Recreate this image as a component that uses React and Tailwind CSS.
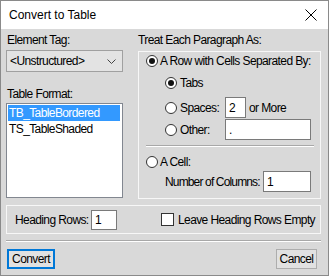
const F = "font-['Liberation_Sans',Arial,sans-serif]";

function Radio({ checked }) {
  return (
    <span className="w-[12px] h-[12px] rounded-full border border-[#333] bg-white flex items-center justify-center shrink-0">
      {checked && <span className="w-[6px] h-[6px] rounded-full bg-[#111]" />}
    </span>
  );
}

function Input({ w, h = 21, value }) {
  return (
    <span
      className="border border-[#7a7a7a] bg-white flex items-center pl-[3px] shrink-0 text-black"
      style={{ width: w, height: h }}
    >
      {value}
    </span>
  );
}

export default function App() {
  return (
    <div className={`${F} w-[329px] h-[276px] border border-[#8a8a8a] bg-[#d9d9d9] flex flex-col text-[12px] tracking-[-0.6px] text-black leading-[14px] whitespace-nowrap`}>
      <div className="h-[28px] bg-white flex items-center justify-between pl-[8px] pr-[11px] shrink-0">
        <span className="text-[12px] tracking-normal">Convert to Table</span>
        <svg width="12" height="12" viewBox="0 0 12 12">
          <path d="M0.5 0.5 L11.5 11.5 M11.5 0.5 L0.5 11.5" stroke="#000" strokeWidth="1" />
        </svg>
      </div>

      <div className="flex pl-[5px] gap-[15px]">
        <div className="w-[117px] flex flex-col">
          <div className="mt-[4px] h-[14px] pl-[1px]">Element Tag:</div>
          <div className="mt-[3px] h-[22px] border border-[#a0a0a0] bg-[#e3e3e3] flex items-center justify-between pl-[3px] pr-[6px]">
            <span>&lt;Unstructured&gt;</span>
            <svg width="9" height="5" viewBox="0 0 9 5">
              <path d="M0.5 0.5 L4.5 4.5 L8.5 0.5" stroke="#444" strokeWidth="1" fill="none" />
            </svg>
          </div>
          <div className="mt-[15px] h-[14px] pl-[1px]">Table Format:</div>
          <div className="mt-[2px] h-[95px] border border-[#828790] bg-white p-[1px] flex flex-col">
            <div className="h-[16px] bg-[#3399ff] text-white flex items-center pl-[1px] mr-[1px]">TB_TableBordered</div>
            <div className="h-[16px] flex items-center pl-[1px]">TS_TableShaded</div>
          </div>
        </div>

        <div className="w-[183px] flex flex-col">
          <div className="mt-[4px] h-[14px]">Treat Each Paragraph As:</div>
          <div className="mt-[4px] h-[148px] border border-[#f7f7f7] flex flex-col">
            <div className="mt-[2px] h-[14px] flex items-center pl-[7px] gap-[2px]">
              <Radio checked />
              <span>A Row with Cells Separated By:</span>
            </div>
            <div className="mt-[8px] h-[14px] flex items-center pl-[26px] gap-[3px]">
              <Radio checked />
              <span>Tabs</span>
            </div>
            <div className="mt-[7px] h-[21px] flex items-center pl-[26px]">
              <Radio />
              <span className="ml-[3px] w-[45px]">Spaces:</span>
              <Input w={21} value="2" />
              <span className="ml-[3px]">or More</span>
            </div>
            <div className="mt-[1px] h-[21px] flex items-center pl-[26px]">
              <Radio />
              <span className="ml-[3px] w-[45px]">Other:</span>
              <Input w={86} value="." />
            </div>
            <div className="mt-[5px] ml-[7px] mr-[6px] h-[2px] border-t border-[#a8a8a8] border-b border-b-white" />
            <div className="mt-[8px] h-[14px] flex items-center pl-[7px] gap-[2px]">
              <Radio />
              <span>A Cell:</span>
            </div>
            <div className="mt-[2px] h-[21px] flex items-center pl-[26px]">
              <span className="w-[98px] shrink-0 tracking-[-0.85px]">Number of Columns:</span>
              <Input w={48} value="1" />
            </div>
          </div>
        </div>
      </div>

      <div className="mt-[6px] ml-[5px] w-[315px] h-[29px] border border-[#f7f7f7] flex items-center pl-[8px]">
        <span className="w-[76px]">Heading Rows:</span>
        <Input w={26} h={20} value="1" />
        <span className="ml-[44px] w-[13px] h-[13px] border border-[#333] bg-white shrink-0" />
        <span className="ml-[4px]">Leave Heading Rows Empty</span>
      </div>

      <div className="mt-[6px] ml-[5px] w-[315px] h-[2px] border-t border-[#a8a8a8] border-b border-b-white" />

      <div className="mt-[7px] flex justify-between pl-[6px] pr-[11px]">
        <div className="w-[48px] h-[20px] border-2 border-[#0078d7] bg-[#e1e1e1] flex items-center justify-center">Convert</div>
        <div className="w-[41px] h-[20px] border border-[#adadad] bg-[#e1e1e1] flex items-center justify-center">Cancel</div>
      </div>
    </div>
  );
}
